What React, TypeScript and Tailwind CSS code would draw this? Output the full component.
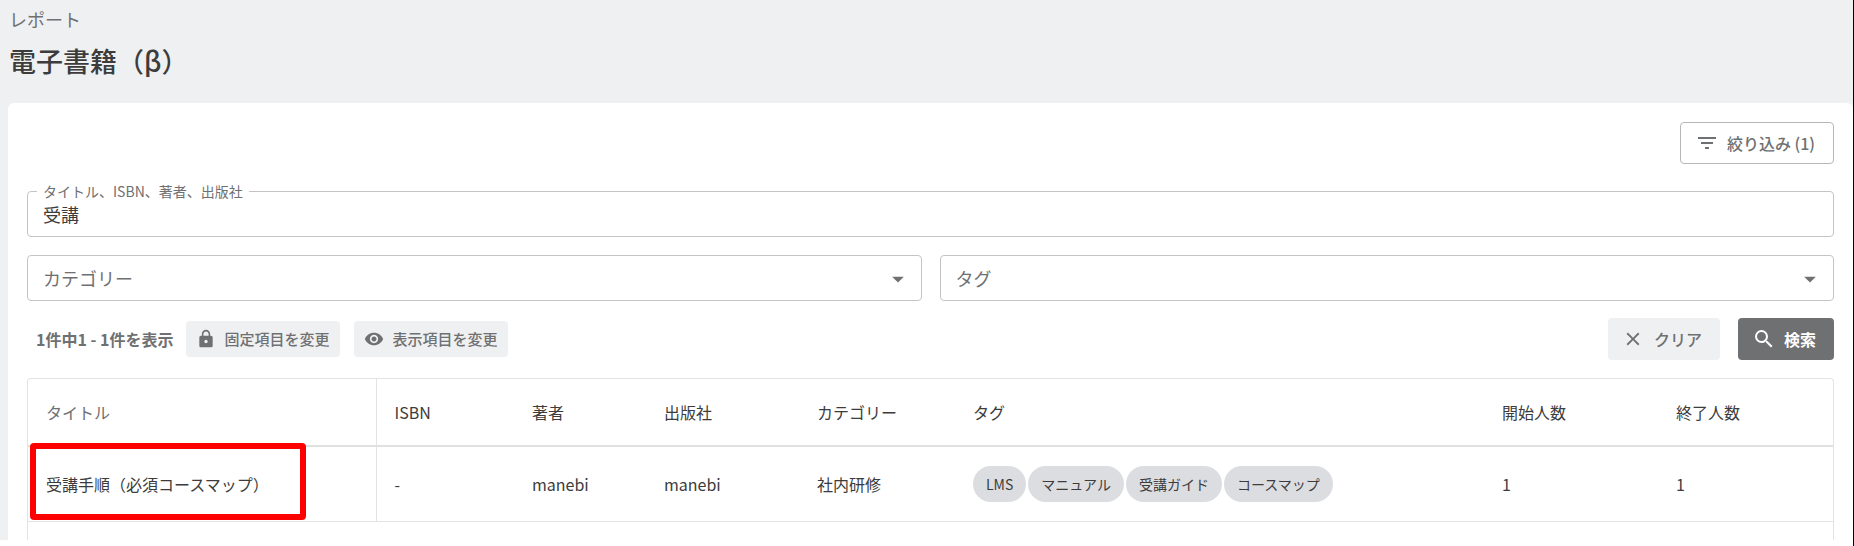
import React, { useState } from "react";
import {
  MdArrowDropDown,
  MdClose,
  MdFilterList,
  MdLock,
  MdSearch,
  MdVisibility,
} from "react-icons/md";

type Book = {
  title: string;
  isbn: string;
  author: string;
  publisher: string;
  category: string;
  tags: string[];
  started: number;
  finished: number;
};

const books: Book[] = [
  {
    title: "受講手順（必須コースマップ）",
    isbn: "-",
    author: "manebi",
    publisher: "manebi",
    category: "社内研修",
    tags: ["LMS", "マニュアル", "受講ガイド", "コースマップ"],
    started: 1,
    finished: 1,
  },
];

const columns = [
  { label: "ISBN", width: "w-[138px]" },
  { label: "著者", width: "w-[132px]" },
  { label: "出版社", width: "w-[153px]" },
  { label: "カテゴリー", width: "w-[156px]" },
  { label: "タグ", width: "" },
  { label: "開始人数", width: "w-[174px]" },
  { label: "終了人数", width: "w-[175px]" },
];

const SelectField: React.FC<{ label: string; options: string[] }> = ({
  label,
  options,
}) => (
  <div className="relative flex-1">
    <select
      aria-label={label}
      defaultValue=""
      className="h-[46px] w-full appearance-none rounded border border-[#c4c4c4] bg-white px-[15px] text-lg text-[#6f7072]"
    >
      <option value="">{label}</option>
      {options.map((option) => (
        <option key={option}>{option}</option>
      ))}
    </select>
    <MdArrowDropDown className="pointer-events-none absolute right-2.5 top-2.5 size-7 text-[#6f7072]" />
  </div>
);

const App: React.FC = () => {
  const [keyword, setKeyword] = useState("受講");

  return (
    <div className="flex h-screen flex-col overflow-hidden border-r border-black bg-white pb-1.5 font-['Noto_Sans_CJK_JP',sans-serif] text-base text-[#3c3c3c]">
      <div className="flex min-h-0 flex-1 flex-col bg-[#eff0f2] pl-2">
        <header className="flex h-[103px] shrink-0 flex-col pl-px">
          <p className="mt-[7px] text-lg leading-6 text-[#6f7072]">レポート</p>
          <h1 className="mt-2.5 text-[27px] font-medium leading-10">
            電子書籍（β）
          </h1>
        </header>

        <main className="flex min-h-0 flex-1 flex-col rounded-t-md bg-white px-[19px] pt-[19px]">
          <div className="flex justify-end">
            <button className="flex h-[42px] items-center gap-2 rounded border border-[#b7b7b8] pl-3.5 pr-[18px] font-medium text-[#6f7072]">
              <MdFilterList className="size-6" />
              絞り込み (1)
            </button>
          </div>

          <div className="relative mt-[27px]">
            <input
              id="keyword"
              value={keyword}
              onChange={(e) => setKeyword(e.target.value)}
              className="block h-[46px] w-full rounded border border-[#c4c4c4] px-[15px] text-lg"
            />
            <label
              htmlFor="keyword"
              className="absolute -top-2.5 left-2.5 bg-white px-1.5 text-sm leading-5 text-[#6f7072]"
            >
              タイトル、ISBN、著者、出版社
            </label>
          </div>

          <div className="mt-[18px] flex gap-[18px]">
            <SelectField label="カテゴリー" options={["社内研修"]} />
            <SelectField label="タグ" options={books[0].tags} />
          </div>

          <div className="mt-[17px] flex h-[42px] items-center">
            <p className="ml-[9px] font-bold text-[#6f7072]">
              1件中1 - 1件を表示
            </p>
            <button className="ml-3 flex h-9 items-center gap-[9px] rounded bg-[#eff0f2] px-2.5 text-[15px] font-medium text-[#6f7072]">
              <MdLock className="size-5" />
              固定項目を変更
            </button>
            <button className="ml-3.5 flex h-9 items-center gap-[9px] rounded bg-[#eff0f2] px-2.5 text-[15px] font-medium text-[#6f7072]">
              <MdVisibility className="size-5" />
              表示項目を変更
            </button>
            <button className="ml-auto flex h-[42px] items-center gap-2.5 rounded bg-[#eff0f2] pl-3.5 pr-[18px] font-medium text-[#6f7072]">
              <MdClose className="size-[22px]" />
              クリア
            </button>
            <button className="ml-[18px] flex h-[42px] items-center gap-2 rounded bg-[#6f7072] pl-3.5 pr-[18px] font-bold text-white">
              <MdSearch className="size-6" />
              検索
            </button>
          </div>

          <div className="mt-[18px] min-h-0 flex-1 rounded-t border border-b-0 border-[#e3e3e4]">
            <table className="w-full table-fixed border-collapse text-left">
              <thead>
                <tr className="h-[67px] border-b-2 border-[#e0e0e0]">
                  <th className="w-[348px] border-r border-[#e3e3e4] px-[18px] font-normal text-[#6f7072]">
                    タイトル
                  </th>
                  {columns.map((column) => (
                    <th
                      key={column.label}
                      className={`px-[18px] font-normal ${column.width}`}
                    >
                      {column.label}
                    </th>
                  ))}
                </tr>
              </thead>
              <tbody>
                {books.map((book) => (
                  <tr
                    key={book.title}
                    className="h-[75px] border-b border-[#e3e3e4]"
                  >
                    <td className="relative border-r border-[#e3e3e4] px-[18px]">
                      {book.title}
                      {/* タイトルを強調する赤枠 */}
                      <span className="pointer-events-none absolute -top-1 left-0.5 h-[77px] w-[276px] rounded-sm border-6 border-[#ff0000]" />
                    </td>
                    <td className="px-[18px]">{book.isbn}</td>
                    <td className="px-[18px]">{book.author}</td>
                    <td className="px-[18px]">{book.publisher}</td>
                    <td className="px-[18px]">{book.category}</td>
                    <td className="px-[18px]">
                      <ul className="flex gap-0.5">
                        {book.tags.map((tag) => (
                          <li
                            key={tag}
                            className="flex h-9 items-center rounded-full bg-[#dcdde1] px-[13px] text-sm"
                          >
                            {tag}
                          </li>
                        ))}
                      </ul>
                    </td>
                    <td className="px-[18px]">{book.started}</td>
                    <td className="px-[18px]">{book.finished}</td>
                  </tr>
                ))}
              </tbody>
            </table>
          </div>
        </main>
      </div>
    </div>
  );
};

export default App;
